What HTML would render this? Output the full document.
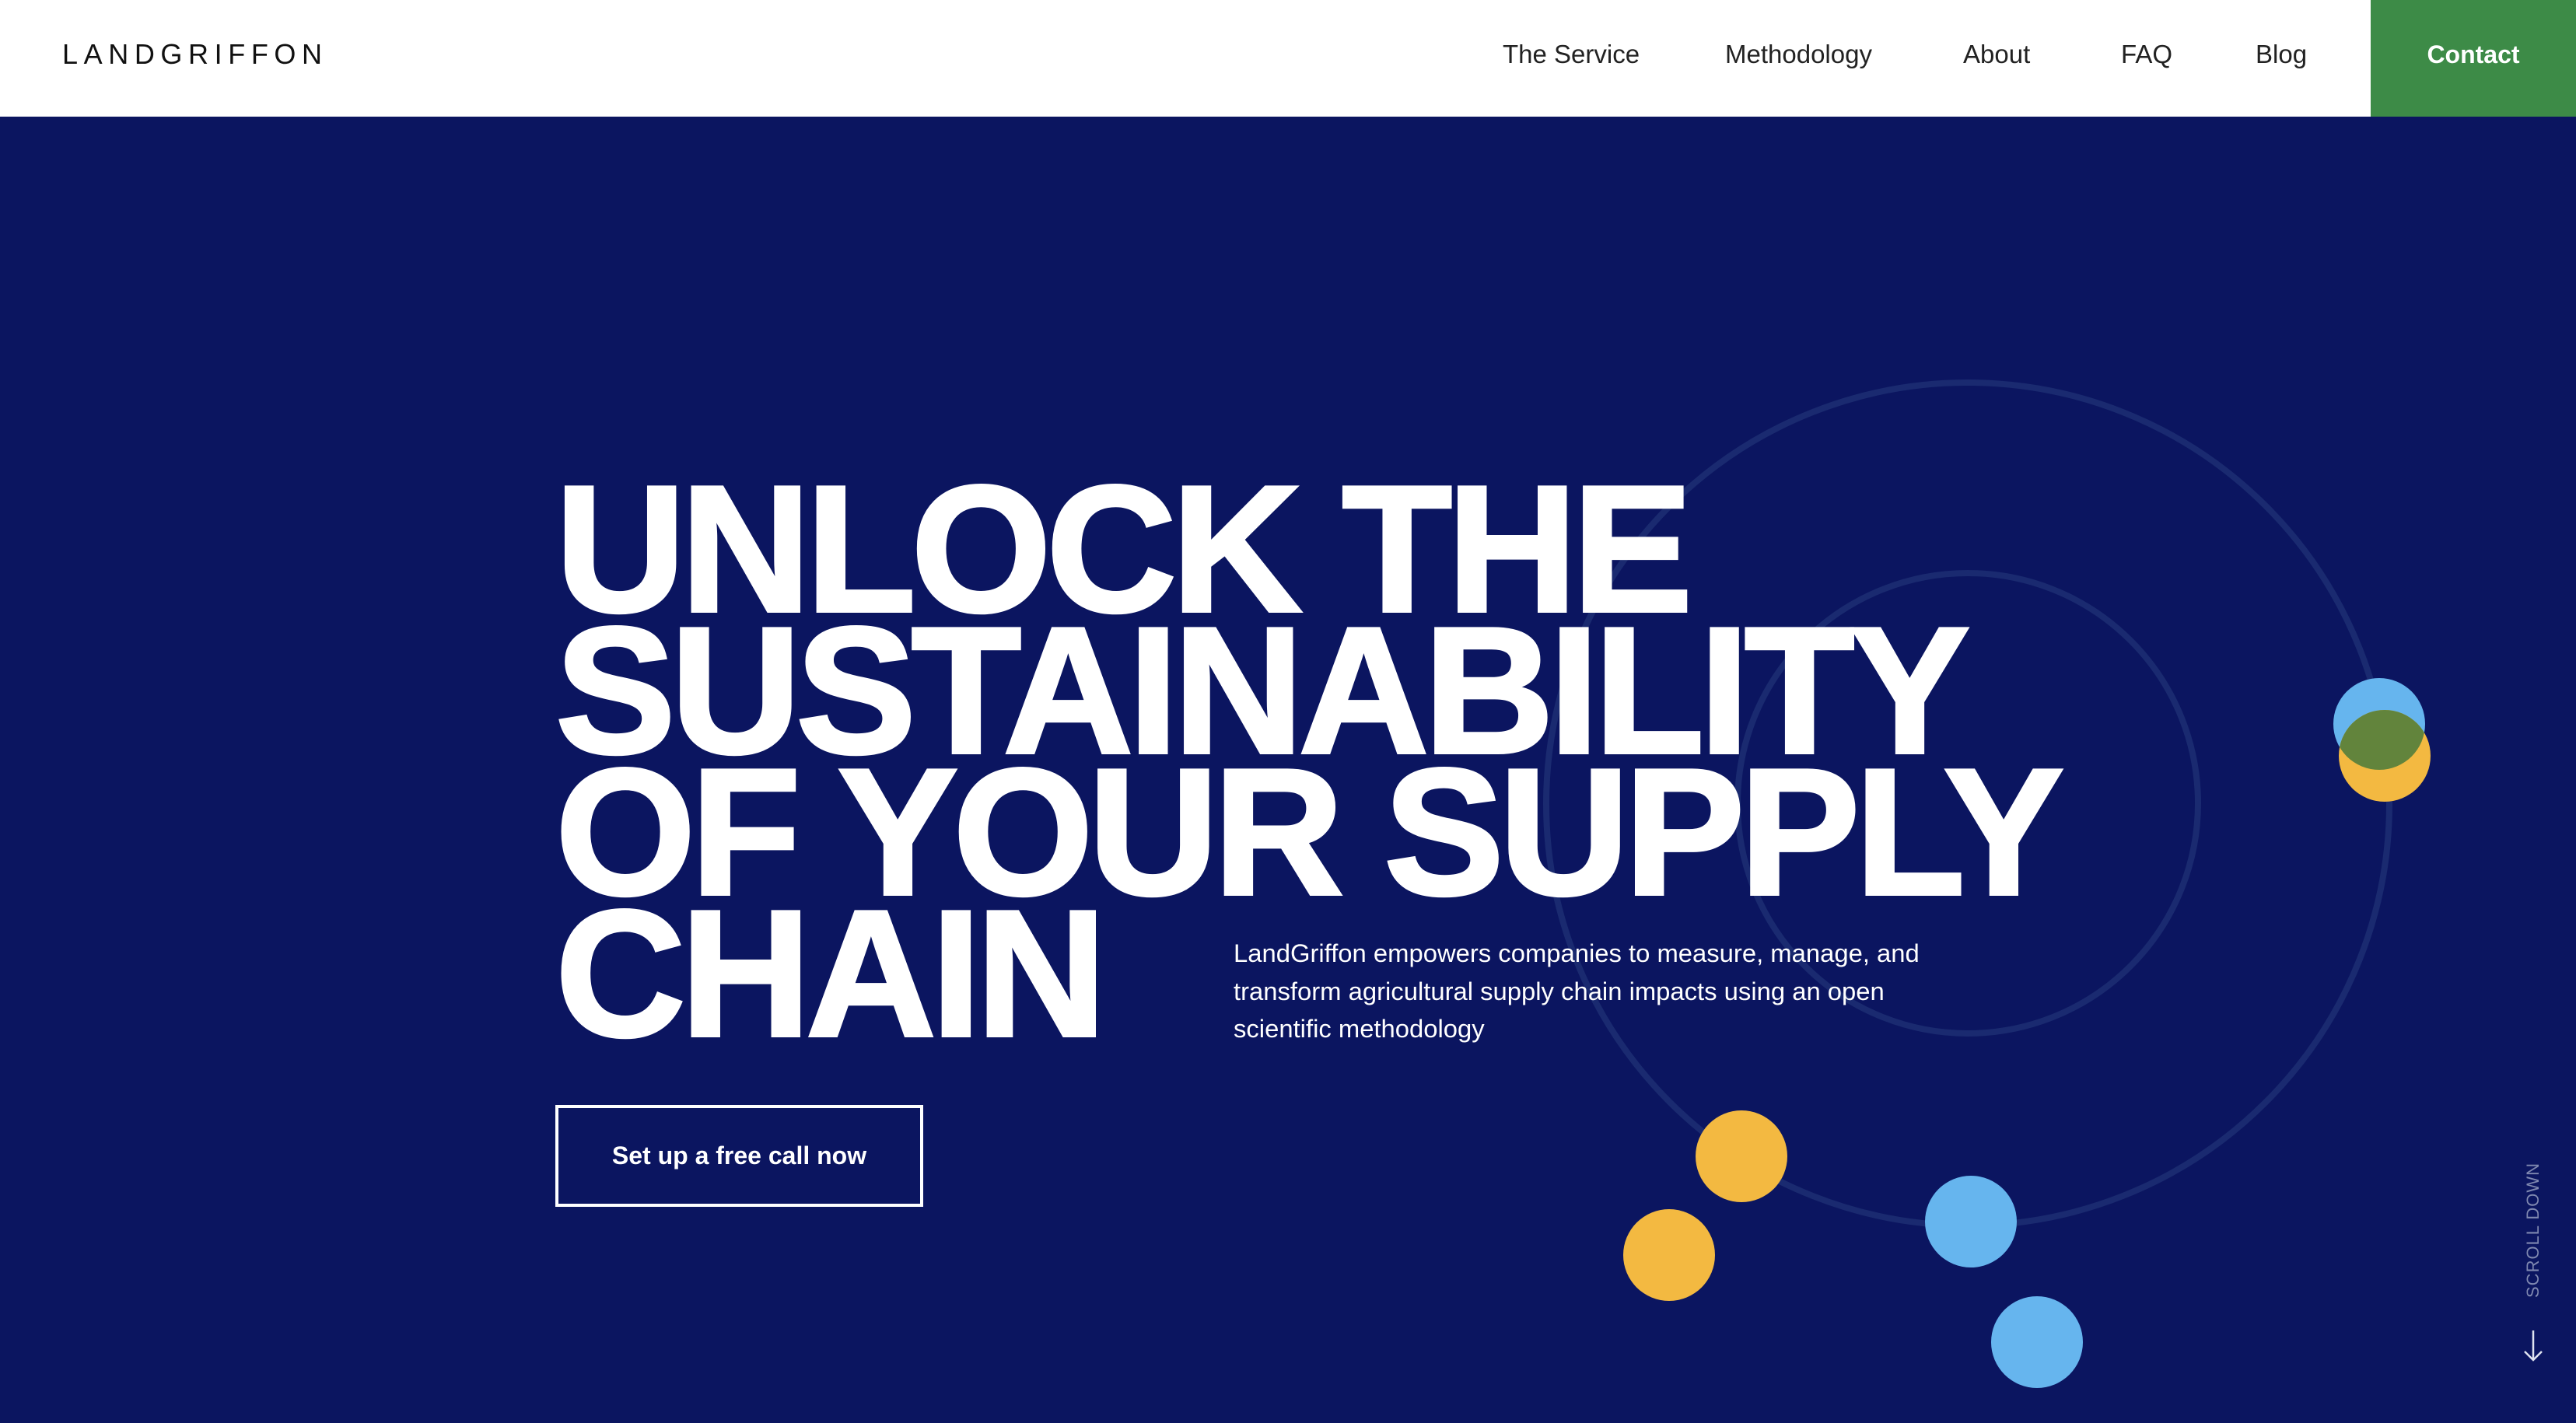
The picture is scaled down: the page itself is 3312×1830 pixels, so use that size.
<!DOCTYPE html>
<html><head><meta charset="utf-8"><style>
*{margin:0;padding:0;box-sizing:border-box}
body{width:3312px;height:1830px;overflow:hidden;background:#0b1560;font-family:"Liberation Sans",sans-serif;position:relative}
.nav{position:absolute;left:0;top:0;width:3312px;height:150px;background:#fff}
.logo{position:absolute;left:80px;top:50px;font-size:36px;letter-spacing:7.6px;color:#111;line-height:40px}
.nav a{position:absolute;top:50px;font-size:33px;color:#222;line-height:40px;text-decoration:none}
.contact{position:absolute;left:3048px;top:0;width:264px;height:150px;background:#3d8b47;color:#fff;font-weight:bold;font-size:32px;text-align:center;line-height:140px}
h1{position:absolute;left:714px;top:616px;color:#fff;font-size:232px;line-height:182px;letter-spacing:-6.5px;font-weight:bold;-webkit-text-stroke:4px #fff;white-space:nowrap}
p{position:absolute;left:1586px;top:1202px;color:#fff;font-size:32.8px;line-height:48.5px;white-space:nowrap}
.btn{position:absolute;left:714px;top:1421px;width:473px;height:131px;border:4px solid #fff;color:#fff;font-weight:bold;font-size:32px;text-align:center;line-height:123px}
.scroll{position:absolute;left:3257px;top:1582px;transform:translate(-50%,-50%) rotate(-90deg);color:#7f88b0;font-size:22px;letter-spacing:1px;white-space:nowrap}
svg{position:absolute;left:0;top:0}
</style></head><body>
<svg width="3312" height="1830">
<defs><clipPath id="cb"><circle cx="3059" cy="931" r="59"/></clipPath></defs>
<circle cx="2530" cy="1034" r="542" fill="none" stroke="#1a2a70" stroke-width="8"/>
<circle cx="2530" cy="1033" r="296" fill="none" stroke="#1a2a70" stroke-width="8"/>
<circle cx="3059" cy="931" r="59" fill="#66b5ee"/>
<circle cx="3066" cy="972" r="59" fill="#f3b941"/>
<circle cx="3066" cy="972" r="59" fill="#62843c" clip-path="url(#cb)"/>
<circle cx="2239" cy="1487" r="59" fill="#f3b941"/>
<circle cx="2146" cy="1614" r="59" fill="#f3b941"/>
<circle cx="2534" cy="1571" r="59" fill="#66b5ee"/>
<circle cx="2619" cy="1726" r="59" fill="#66b5ee"/>
<path d="M3257 1711 V1749 M3246 1738 L3257 1749 L3268 1738" stroke="#dfe3f0" stroke-width="2.5" fill="none"/>
</svg>
<div class="nav">
<div class="logo">LANDGRIFFON</div>
<a style="left:1932px">The Service</a>
<a style="left:2218px">Methodology</a>
<a style="left:2524px">About</a>
<a style="left:2727px">FAQ</a>
<a style="left:2900px">Blog</a>
<div class="contact">Contact</div>
</div>
<h1>UNLOCK THE<br>SUSTAINABILITY<br>OF YOUR SUPPLY<br>CHAIN</h1>
<p>LandGriffon empowers companies to measure, manage, and<br>transform agricultural supply chain impacts using an open<br>scientific methodology</p>
<div class="btn">Set up a free call now</div>
<div class="scroll">SCROLL DOWN</div>
</body></html>
